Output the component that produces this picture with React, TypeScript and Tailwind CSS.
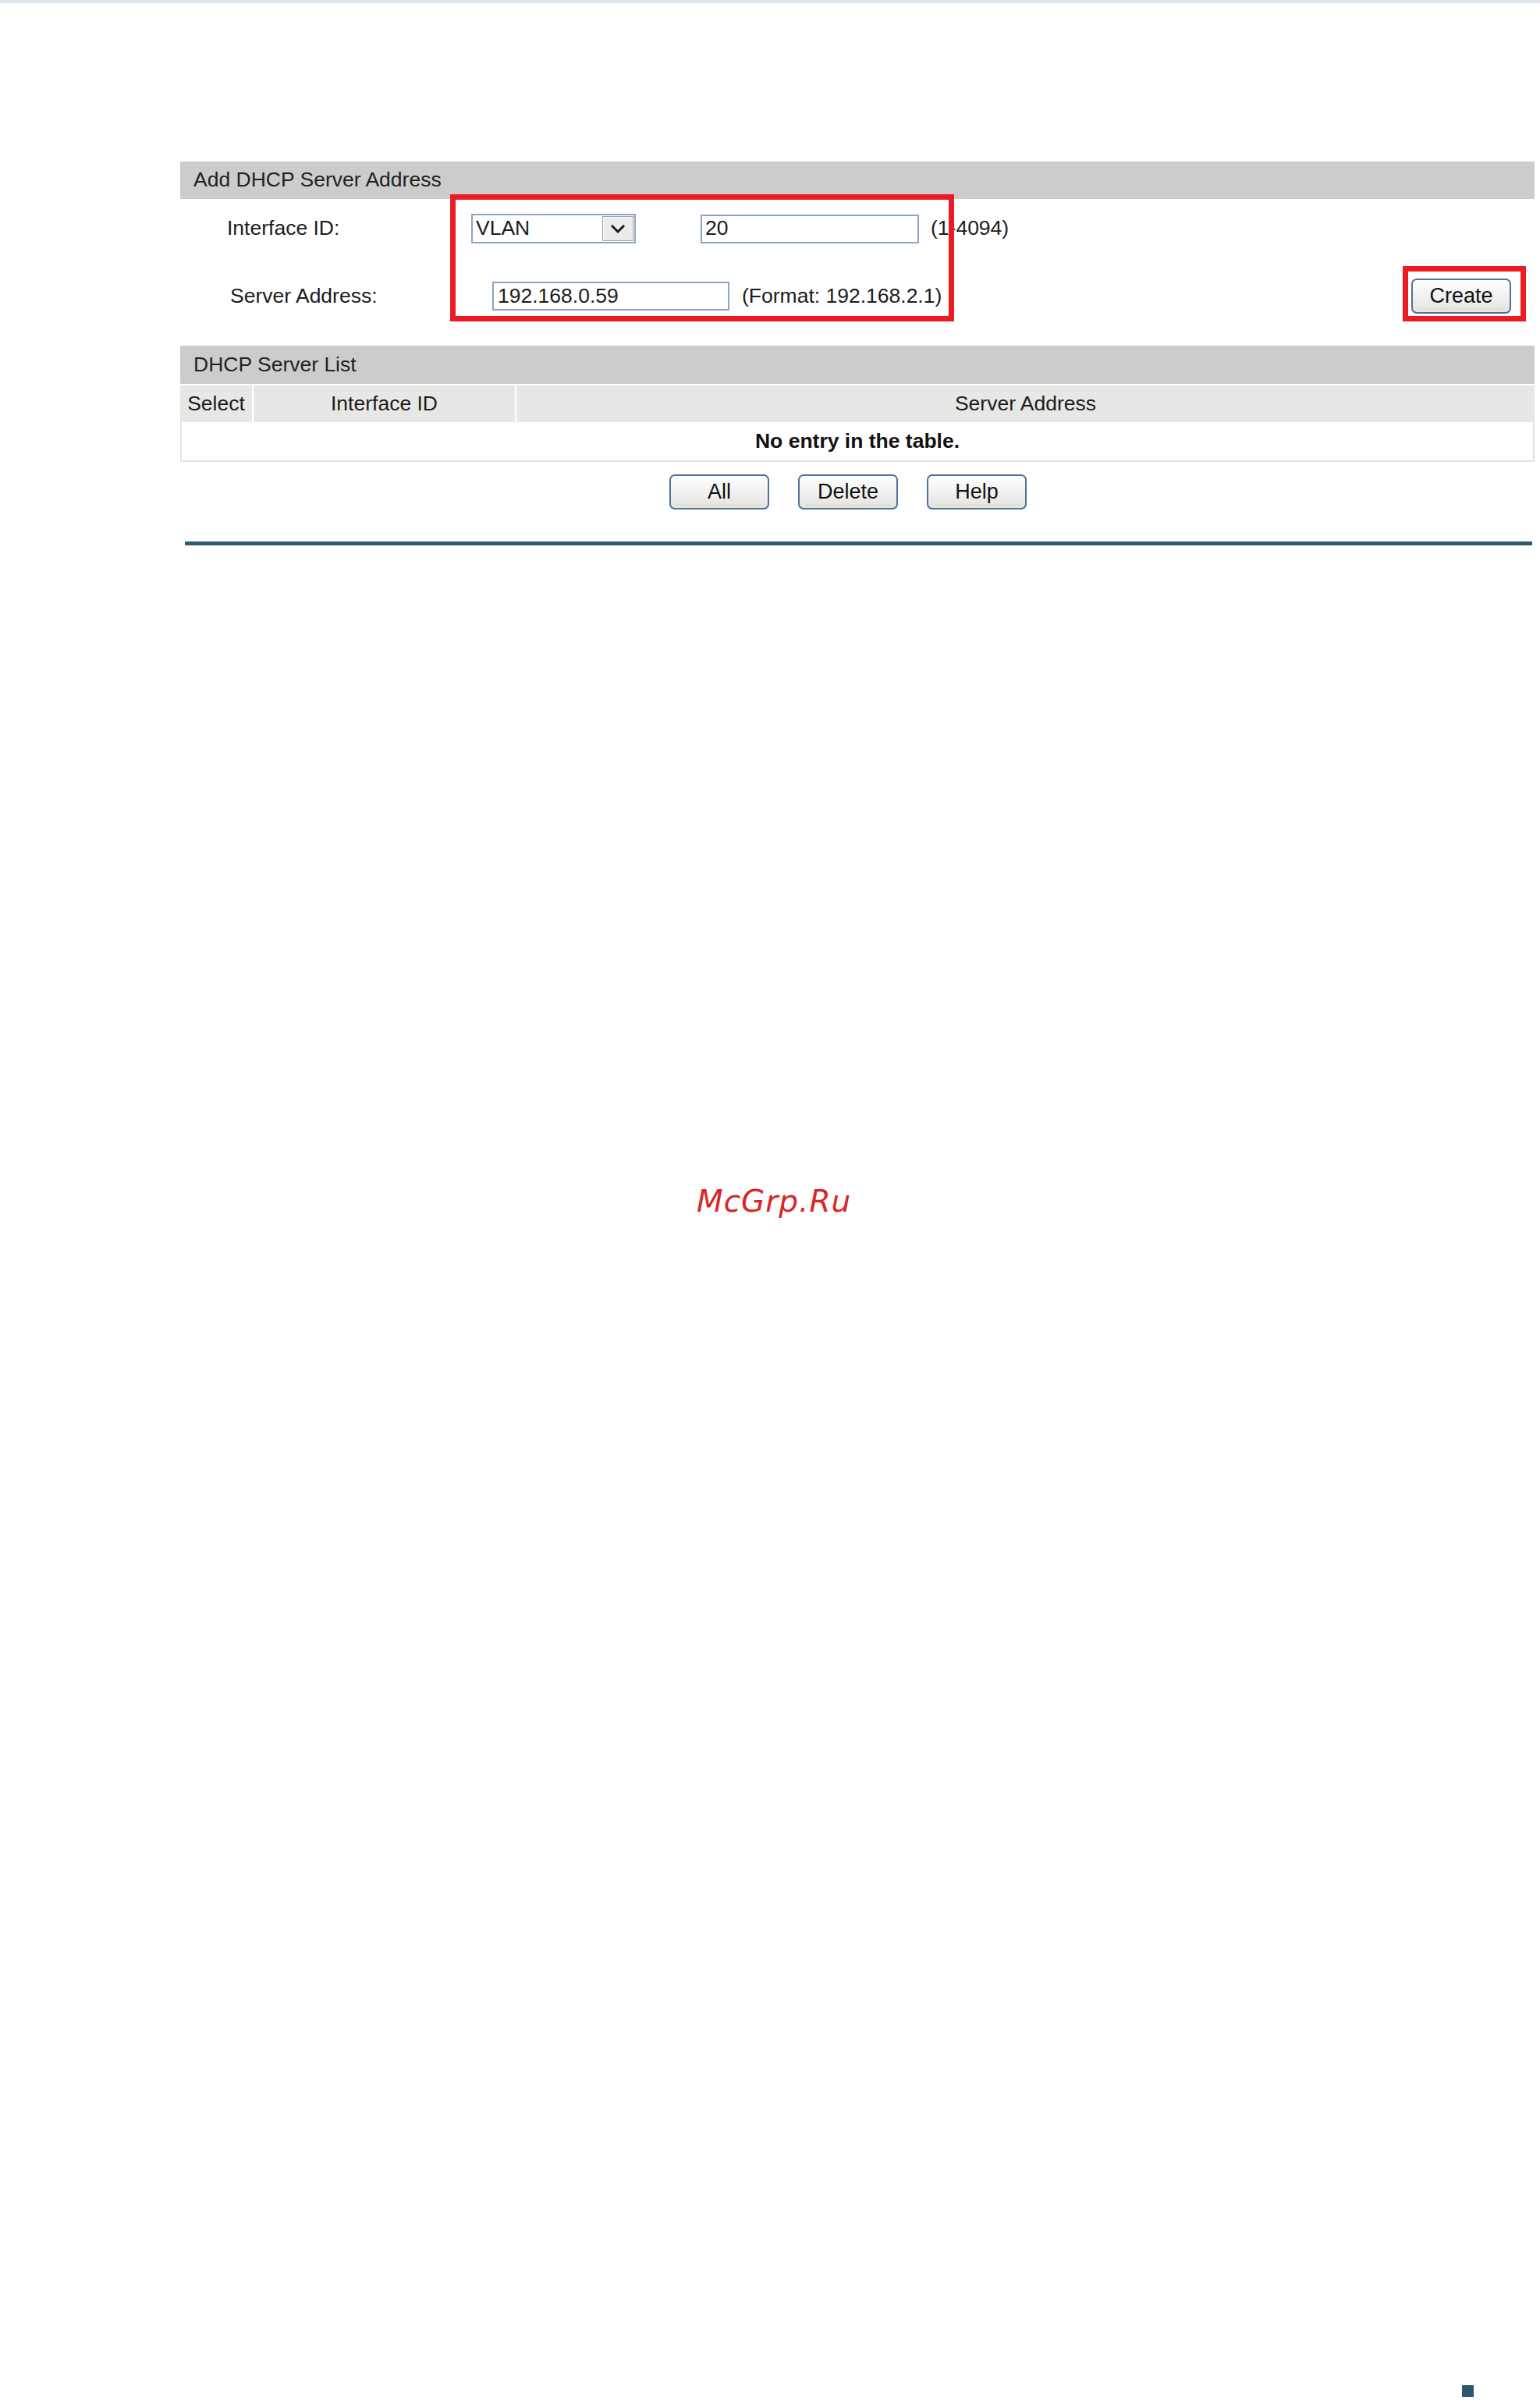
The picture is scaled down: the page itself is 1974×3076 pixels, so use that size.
import React from "react";

const font = { fontFamily: '"Liberation Sans", Arial, sans-serif' };

function Btn({ label, className = "" }: { label: string; className?: string }) {
  return (
    <div
      className={`relative flex h-[45px] w-[128px] items-center justify-center rounded-[7px] border-2 border-[#52709c] bg-gradient-to-b from-[#ffffff] to-[#e3e3e3] text-[27px] text-[#111] ${className}`}
    >
      <span className="leading-none">{label}</span>
      <span className="absolute bottom-[3px] left-[8px] right-[8px] border-b-2 border-dotted border-[#eadb9c]" />
    </div>
  );
}

export default function App() {
  return (
    <div className="relative h-[3076px] w-full bg-white text-[#1c1c1c]" style={font}>
      <div className="h-[4px] w-full bg-[#dce6ec]" />

      <div className="ml-[231px] mt-[203px] w-[1736px]">
        {/* Add DHCP Server Address */}
        <div className="flex h-[48px] items-center bg-[#cccccc] pl-[17px] text-[26.5px] text-[#222]">
          Add DHCP Server Address
        </div>

        <div className="relative h-[188px] pt-[19px] text-[26.5px]">
          <div className="flex h-[38px] items-center">
            <div className="w-[373px] pl-[60px]">Interface ID:</div>
            <div className="flex h-[38px] w-[211px] items-center border-2 border-[#8ca5c4] bg-white">
              <span className="flex-1 pl-[4px]">VLAN</span>
              <div className="mr-[1px] flex h-[32px] w-[40px] items-center justify-center border border-[#a3a3a3] bg-[#ebebeb] shadow-[inset_1px_1px_0_#fff]">
                <svg width="22" height="14" viewBox="0 0 22 14">
                  <path d="M3 3 L11 11 L19 3" fill="none" stroke="#1a1a1a" strokeWidth="3" />
                </svg>
              </div>
            </div>
            <div className="ml-[83px] flex h-[37px] w-[280px] items-center border-2 border-[#8ca5c4] bg-white pl-[4px]">
              20
            </div>
            <span className="ml-[15px]">(1-4094)</span>
          </div>

          <div className="mt-[45px] flex h-[45px] items-center">
            <div className="w-[400px] pl-[64px]">Server Address:</div>
            <div className="flex h-[37px] w-[304px] items-center border-2 border-[#8ca5c4] bg-white pl-[5px]">
              192.168.0.59
            </div>
            <span className="ml-[16px]">(Format: 192.168.2.1)</span>
            <Btn label="Create" className="ml-auto mr-[30px]" />
          </div>

          {/* annotation boxes */}
          <div className="pointer-events-none absolute left-[346px] top-[-6px] h-[163px] w-[646px] border-[7px] border-[#ed1c24]" />
          <div className="pointer-events-none absolute left-[1567px] top-[86px] h-[71px] w-[158px] border-[7px] border-[#ed1c24]" />
        </div>

        {/* DHCP Server List */}
        <div className="flex h-[49px] items-center bg-[#cccccc] pl-[17px] text-[26.5px] text-[#222]">
          DHCP Server List
        </div>
        <div className="mt-[2px] flex h-[47px] gap-[2px] text-[26.5px]">
          <div className="flex w-[92px] items-center justify-center bg-[#e7e7e5]">Select</div>
          <div className="flex w-[335px] items-center justify-center bg-[#e7e7e5]">Interface ID</div>
          <div className="flex flex-1 items-center justify-center bg-[#e7e7e5]">Server Address</div>
        </div>
        <div className="flex h-[51px] items-center justify-center border-x-2 border-b-2 border-[#e3e3e3] text-[26.5px] font-bold text-[#111]">
          No entry in the table.
        </div>

        <div className="mt-[16px] flex gap-[37px] pl-[627px]">
          <Btn label="All" />
          <Btn label="Delete" />
          <Btn label="Help" />
        </div>

        <div className="ml-[6px] mt-[41px] h-[5px] w-[1727px] bg-[#2f5a6d]" />
      </div>

      <div
        className="absolute left-[893px] top-[1520px] text-[39px] italic leading-none tracking-[1px] text-[#d92626]"
        style={{ fontFamily: '"DejaVu Sans", sans-serif' }}
      >
        McGrp.Ru
      </div>

      <div className="absolute left-[1874px] top-[3057px] h-[15px] w-[15px] bg-[#2c586b]" />
    </div>
  );
}
